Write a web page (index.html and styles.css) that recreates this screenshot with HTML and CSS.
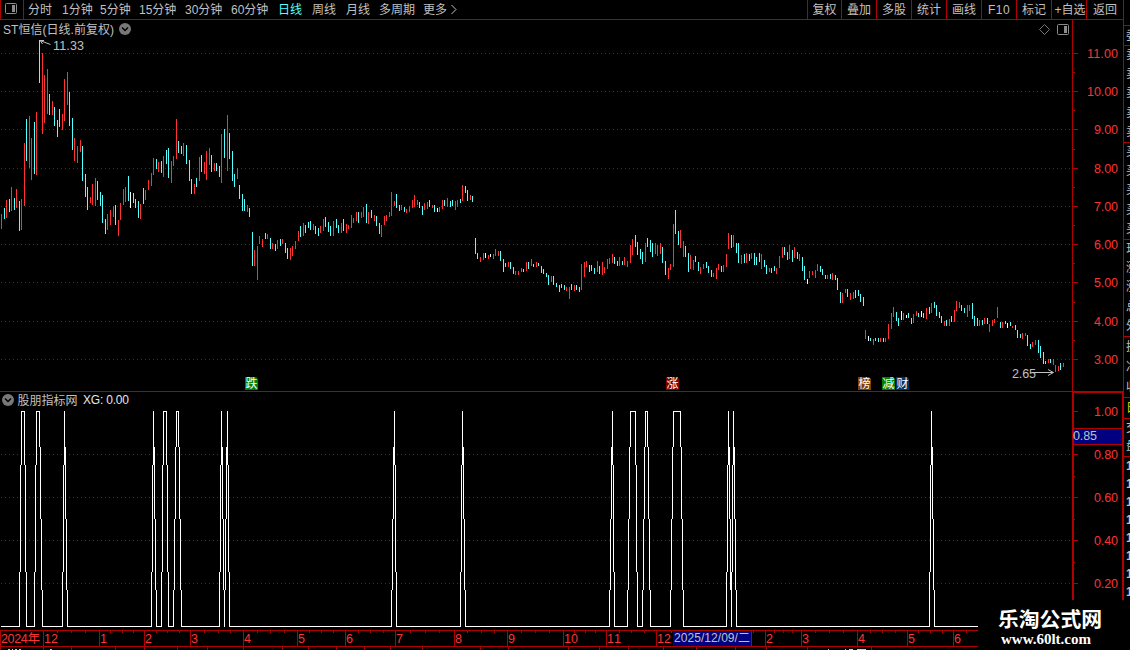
FILE: index.html
```html
<!DOCTYPE html>
<html lang="zh-CN">
<head>
<meta charset="utf-8">
<title>ST恒信</title>
<link rel="stylesheet" href="styles.css">
</head>
<body>
<div class="app">
  <div class="main">
    <header class="toolbar">
      <div class="dock"><svg width="14" height="14" viewBox="0 0 14 14"><rect x="1.5" y="1.5" width="11" height="10" rx="1" fill="none" stroke="#8c8c8c"/><rect x="8" y="3" width="3" height="7" fill="#8c8c8c"/></svg></div>
      <nav class="periods">
        <span class="w34">分时</span><span class="w38">1分钟</span><span class="w39">5分钟</span><span class="w46">15分钟</span><span class="w46">30分钟</span><span class="w47">60分钟</span><span class="w34 active">日线</span><span class="w34">周线</span><span class="w33">月线</span><span class="w44">多周期</span><span class="w27">更多</span><svg width="8" height="12" viewBox="0 0 8 12"><path d="M1.5 1L6 5.500L1.5 10" fill="none" stroke="#c0c0c0"/></svg>
      </nav>
      <nav class="tools">
        <span class="first">复权</span><span>叠加</span><span>多股</span><span>统计</span><span>画线</span><span class="latin">F10</span><span>标记</span><span class="plus">+自选</span><span class="last">返回</span>
      </nav>
    </header>
    <svg class="price" id="price" width="1123" height="371" viewBox="0 20 1123 371">
      <text x="3" y="33.500" textLength="111">ST恒信(日线.前复权)</text>
      <circle cx="125" cy="29" r="6" fill="#787878"/><path class="chev" d="M122 27.500L125 30.500L128 27.500"/>
      <path d="M1039.500 29.500L1044.500 24.500L1049.500 29.500L1044.500 34.500Z" fill="none" stroke="#787878"/>
      <rect x="1057.500" y="24.500" width="11" height="10" rx="1" fill="none" stroke="#8c8c8c"/><rect x="1064" y="26" width="3" height="7" fill="#8c8c8c"/>
    </svg>
    <svg class="signal" id="signal" width="1123" height="239" viewBox="0 391 1123 239">
      <circle cx="8" cy="400" r="6" fill="#787878"/><path class="chev" d="M5 398.500L8 401.500L11 398.500"/>
      <text x="17.500" y="404.500" textLength="60">股朋指标网</text>
      <text class="bright" x="83" y="404" textLength="46">XG: 0.00</text>
    </svg>
    <svg class="dates" id="dates" width="1123" height="20" viewBox="0 630 1123 20"></svg>
  </div>
  <aside class="quotes">
    <div class="blank"></div>
    <div class="row h20">委</div>
    <div class="row h97"><i>卖</i><i>卖</i><i>卖</i><i>卖</i><i>卖</i></div>
    <div class="row h97"><i>买</i><i>买</i><i>买</i><i>买</i><i>买</i></div>
    <div class="row h97"><i>现</i><i>涨</i><i>涨</i><i>总</i><i>外</i></div>
    <div class="row h61"><i>换</i><i>净</i><i>收</i></div>
    <div class="row h21 yellow">日</div>
    <div class="row h38"><i>交</i><i>盘</i></div>
    <div class="row deals"><i>1</i><i>1</i><i>1</i><i>1</i><i>1</i><i>1</i><i>1</i><i>1</i></div>
  </aside>
  <div class="brand"><b>乐淘公式网</b><span>www.60lt.com</span></div>
</div>
<script src="chart.js"></script>
</body>
</html>
```
FILE: styles.css
```css
* { box-sizing: border-box; }
body { margin: 0; background: #000; overflow: hidden; }
.app {
  position: relative;
  display: flex;
  width: 1130px;
  height: 650px;
  color: #c0c0c0;
  font: 12px/16px "Liberation Sans", "Noto Sans CJK SC", sans-serif;
  overflow: hidden;
}
.main { width: 1123px; display: flex; flex-direction: column; }
.main svg { display: block; flex: none; }
.toolbar {
  display: flex;
  height: 20px;
  border-bottom: 1px solid #b00000;
  border-left: 1px solid #b00000;
  white-space: nowrap;
}
.dock { width: 23px; height: 19px; padding: 2px 0 0 3px; border-right: 1px solid #b00000; }
.periods { display: flex; align-items: center; width: 783px; padding-left: 4px; }
.periods span { flex: none; }
.w27 { width: 27px; }
.w33 { width: 33px; }
.w34 { width: 34px; }
.w38 { width: 38px; }
.w39 { width: 39px; }
.w44 { width: 44px; }
.w46 { width: 46px; }
.w47 { width: 47px; }
.active { color: #54ffff; }
.tools { display: flex; height: 19px; }
.tools span {
  width: 35px;
  padding-top: 2px;
  border-left: 1px solid #b00000;
  text-align: center;
}
.tools .first { width: 34px; }
.tools .last { width: 37px; }
.tools .latin { letter-spacing: 0.5px; }
.tools .plus { padding-left: 2px; }
.quotes { width: 7px; height: 650px; border-left: 1px solid #b00000; overflow: hidden; }
.row {
  display: flex;
  flex-direction: column;
  justify-content: space-around;
  border-top: 1px solid #b00000;
  padding-left: 2px;
  width: 20px;
}
.row i { font-style: normal; line-height: 17px; }
.blank { height: 25px; }
.h20 { height: 20px; }
.h21 { height: 21px; }
.h38 { height: 38px; }
.h61 { height: 61px; }
.h97 { height: 97px; }
.yellow { color: #d8d800; }
.deals { height: 146px; font-weight: bold; }
.brand {
  position: absolute;
  left: 978px;
  top: 600px;
  width: 152px;
  height: 50px;
  padding: 6px 0 0 20px;
  background: #000;
  color: #fff;
  display: flex;
  flex-direction: column;
}
.brand b { font: bold 20.8px/25px "Noto Sans CJK SC", sans-serif; }
.brand span { font: bold 15px/16px "Liberation Serif", serif; padding-left: 3px; }
text { fill: #c0c0c0; font-size: 12px; }
.axis { fill: #ff3232; font-size: 12.5px; }
.note { font-size: 12.5px; }
.bright { fill: #e8e8e8; }
.arrow { fill: none; stroke: #c0c0c0; }
.chev { fill: none; stroke: #000; stroke-width: 1.5; }
.frame { fill: #b00000; }
.grid { stroke: #b00000; stroke-dasharray: 1 3; }
.bars { fill: none; stroke-width: 1; shape-rendering: crispEdges; }
.tag { fill: #fff; font-size: 12px; }
```
FILE: chart.js
```js
const NS = "http://www.w3.org/2000/svg";
const price = document.getElementById("price");
const signal = document.getElementById("signal");
const dates = document.getElementById("dates");

function add(parent, name, attrs, text) {
  const el = document.createElementNS(NS, name);
  for (const key in attrs) el.setAttribute(key, attrs[key]);
  if (text !== undefined) el.textContent = text;
  parent.appendChild(el);
  return el;
}
function box(parent, x, y, width, height, fill) {
  const attrs = { x, y, width, height, class: "frame" };
  if (fill) { delete attrs.class; attrs.fill = fill; }
  return add(parent, "rect", attrs);
}
function gridLine(parent, y) {
  add(parent, "line", { x1: 1, x2: 1072, y1: y + 0.5, y2: y + 0.5, class: "grid" });
}
function label(parent, y, text) {
  const w = text.length === 5 ? 31 : 24;
  add(parent, "text", { x: 1118 - w, y: y + 5, textLength: w, class: "axis" }, text);
}

// Price scale and grid
[53, 91, 129, 168, 206, 244, 282, 321, 359].forEach((y, i) => {
  gridLine(price, y);
  box(price, 1073, y, 5, 1);
  label(price, y, (11 - i).toFixed(2));
});
[72, 110, 149, 187, 225, 263, 302, 340].forEach(y => box(price, 1073, y, 2, 1));
box(price, 1072, 20, 1, 371);

// Daily ranges: direction, x, high, low
const candles = `R1 214 229,C4 208 219,R6 200 218,C9 199 212,R11 187 211,C14 198 210,R16 189 208,C19 201 231,R21 199 230,R24 143 206,C26 119 161,R29 116 168,R31 138 180,C34 122 174,R36 112 175,C39 40 83,R42 53 134,R44 75 123,R47 69 114,C49 94 115,R52 101 115,C54 107 126,C57 120 137,C59 109 127,R62 114 130,R64 79 121,R67 72 105,C69 92 126,C72 118 150,R74 138 161,R77 146 163,R80 140 152,C82 146 181,C85 174 197,C87 187 210,R90 197 203,R92 184 205,R95 178 206,C97 181 200,C100 192 206,C102 195 223,C105 219 234,R107 214 230,R110 210 225,R113 206 217,C115 205 225,R118 220 236,R120 203 220,R123 189 205,R125 187 202,C128 176 201,W130 192 208,C133 193 203,C135 199 208,C138 201 218,R140 204 219,C143 188 204,R145 190 200,R148 180 190,R151 173 186,R153 158 175,C156 159 169,R158 162 172,C161 161 173,R163 156 177,C166 150 164,C168 148 178,R171 161 183,R173 156 166,R176 119 159,C178 141 153,C181 146 154,R183 143 156,C186 145 164,C189 160 181,C191 179 194,R194 184 194,C196 178 187,R199 157 181,C201 155 172,R204 162 174,R206 151 180,R209 148 165,C211 155 172,R214 163 171,C216 163 171,C219 166 177,R221 134 183,C224 129 158,R227 115 171,C229 133 159,C232 151 181,C234 174 187,R237 168 179,C239 185 199,
C242 194 211,C244 199 211,R247 205 212,C249 208 217,C252 232 266,R254 250 266,R257 246 280,R259 236 244,R262 239 247,C265 233 239,R267 234 239,C270 238 249,R272 243 249,C275 244 251,R277 240 249,C280 239 246,R282 239 244,C285 243 253,C287 248 259,R290 248 260,R292 246 256,R295 241 249,R298 231 241,C300 226 237,R303 223 236,C305 225 233,C308 222 228,C310 221 230,R313 224 230,C315 226 234,C318 228 236,R320 226 233,R323 219 231,C325 217 227,C328 222 232,C330 226 236,R333 221 236,C336 219 228,C338 225 233,R341 223 233,C343 219 231,R346 224 233,R348 225 229,R351 215 228,R353 218 223,R356 212 221,C358 212 223,R361 212 218,R363 207 217,C366 204 223,R368 212 224,C371 210 218,R374 215 221,C376 216 226,C379 223 234,R381 225 237,R384 216 225,R386 215 221,R389 212 217,R391 192 216,R394 201 206,C396 194 208,C399 205 211,R401 205 210,C404 207 212,R406 209 213,R409 206 212,R412 200 208,R414 195 207,R417 200 205,C419 202 208,C422 206 215,R424 203 210,R427 202 209,C429 200 207,R432 205 208,C434 205 212,W437 208 212,R439 207 212,R442 200 209,C444 200 206,R447 198 207,C450 201 207,C452 200 206,R455 201 210,R457 200 207,C460 199 203,R462 185 201,C465 186 193,C467 190 201,R470 195 200,C472 196 202,
C475 238 254,C477 253 259,R480 257 262,R483 253 260,W485 253 258,R488 255 259,W490 254 257,R493 254 259,R495 249 256,R498 251 256,C500 251 261,C503 259 272,C505 263 267,R508 262 267,C510 262 269,C513 267 274,R515 271 275,R518 271 275,R521 268 272,C523 269 272,R526 262 271,C528 262 269,R531 259 266,C533 264 267,R536 262 267,C538 263 266,C541 266 273,C543 269 274,C546 273 277,C548 275 285,R551 276 282,C553 276 285,C556 283 287,C559 285 292,C561 284 288,C564 285 290,R566 287 291,R569 287 299,C571 284 290,R574 285 291,C576 285 290,C579 287 292,R581 264 290,R584 262 277,R586 261 267,C589 265 272,C591 265 271,C594 268 274,R597 261 272,C599 266 274,R602 262 275,R604 267 273,R607 259 269,R609 258 264,R612 254 263,C614 257 264,C617 261 266,R619 257 266,C622 261 265,R624 257 265,R627 261 267,R630 245 263,R632 239 255,C635 235 247,C637 242 255,C640 249 259,C642 252 264,R645 243 262,C647 238 247,C650 240 252,C652 243 257,R655 243 254,R657 245 256,R660 243 254,C662 247 263,C665 261 275,R668 268 279,R670 264 270,R673 224 267,C675 210 234,C678 231 245,R680 230 248,R683 241 257,C685 246 257,C688 253 272,R690 255 269,R693 260 270,C695 256 262,C698 262 271,R700 267 274,R703 264 269,C706 262 268,C708 266 273,C711 270 277,R713 273 277,R716 268 279,R718 264 270,C721 266 272,R723 265 272,R726 254 267,
R728 233 249,C731 235 248,R733 235 247,C736 243 253,C738 243 263,R741 255 264,C744 254 263,R746 253 263,C749 254 261,R751 253 259,C754 253 265,C756 257 265,C759 253 262,R761 254 269,C764 260 267,C766 265 274,R769 268 272,C771 268 273,C774 266 271,R776 268 274,R779 256 268,R782 247 258,C784 247 255,C787 252 260,R789 245 259,C792 250 262,R794 247 258,C797 252 259,R799 254 261,C802 257 271,C804 266 280,W807 279 284,R809 271 278,R812 271 275,R815 270 278,R817 264 271,C820 266 272,C822 269 275,C825 275 279,R827 275 279,C830 274 279,R832 273 280,C835 275 280,C837 278 290,C840 292 303,R842 293 303,R845 289 293,C847 289 297,R850 293 300,R853 292 299,C855 290 298,C858 290 296,C860 294 302,C863 297 306,R865 330 339,W868 336 341,C870 338 341,R873 339 345,C875 338 341,C878 338 342,R880 338 342,C883 338 342,R885 338 342,R888 324 339,R891 313 329,R893 307 317,C896 312 321,C898 318 326,W901 311 320,R903 313 320,W906 315 318,C908 313 318,C911 318 324,R913 314 323,R916 311 316,C918 313 317,W921 311 317,C923 313 318,R926 308 319,C929 307 314,R931 303 313,C934 302 308,C936 305 316,C939 312 318,C941 316 323,R944 321 326,C946 320 326,R949 319 326,C951 316 322,R954 310 322,R956 301 311,R959 302 308,C961 305 311,C964 308 313,R967 305 317,R969 305 311,C972 303 319,C974 316 326,C977 318 326,R979 320 326,C982 320 325,R984 318 324,C987 318 324,R989 324 332,R992 320 326,R994 319 323,R997 307 318,C1000 322 328,R1002 322 328,C1005 321 324,W1007 323 328,C1010 322 326,R1012 326 328,C1015 325 330,C1017 330 338,C1020 334 338,R1022 333 339,R1025 333 336,C1027 335 346,C1030 344 349,R1032 342 347,R1035 340 345,C1038 340 353,C1040 346 358,C1043 352 364,C1045 361 364,R1048 359 363,C1050 359 363,R1053 359 365,R1055 365 372,R1058 366 371,C1060 363 370,R1063 363 367`;
const paths = { R: "", C: "", W: "" };
candles.split(",").forEach(item => {
  const [head, top, bottom] = item.trim().split(" ");
  paths[head[0]] += `M${+head.slice(1) + 0.5} ${top}V${bottom}`;
});
const colors = { R: "#ff3232", C: "#54ffff", W: "#ffffff" };
for (const k in paths) add(price, "path", { d: paths[k], stroke: colors[k], class: "bars" });

// High and low annotations
add(price, "path", { d: "M50.5 44.5L40 40.500H44M40.5 41L42.500 44", class: "arrow" });
add(price, "text", { x: 53, y: 50, textLength: 31, class: "note" }, "11.33");
add(price, "text", { x: 1012, y: 378, textLength: 24, class: "note" }, "2.65");
add(price, "path", { d: "M1032 372.500H1053M1048 369.500L1053.500 372.500L1048 375.500", class: "arrow" });

// Event tags
[[245, "跌", "#008000"], [666, "涨", "#800000"], [858, "榜", "#804000"], [882, "减", "#008000"], [896, "财", "#003366"]].forEach(([x, t, c]) => {
  add(price, "path", { d: `M${x} 377h11l2 2v11h-13z`, fill: c });
  add(price, "text", { x: x + 0.5, y: 388, class: "tag" }, t);
});

// Signal scale and grid
box(signal, 0, 391, 1123, 1);
box(signal, 1072, 391, 51, 2);
box(signal, 1072, 391, 2, 239);
box(signal, 1122, 391, 1, 239);
[411, 454, 497, 540, 583].forEach((y, i) => {
  if (i) gridLine(signal, y);
  box(signal, 1074, y, 4, 1);
  label(signal, y, (1 - i * 0.2).toFixed(2));
});
[476, 519, 562].forEach(y => box(signal, 1074, y, 1, 1));
box(signal, 1074, 428, 48, 17);
box(signal, 1074, 429, 48, 15, "#000080");
add(signal, "text", { x: 1073, y: 440, textLength: 24, class: "note" }, "0.85");

// Signal pulses: base left, peak left, peak right, base right
const pulses = [[19, 21, 24, 26], [34, 36, 39, 42], [62, 64, 64, 67], [151, 153, 153, 156], [161, 163, 166, 168], [173, 176, 178, 181], [219, 221, 221, 224], [224, 227, 227, 229], [391, 394, 394, 396], [460, 462, 462, 465], [609, 612, 612, 614], [627, 630, 635, 637], [642, 645, 647, 650], [670, 673, 680, 683], [726, 728, 728, 731], [731, 733, 733, 736], [929, 931, 931, 934]];
const LOW = 626, HIGH = 411;
function edge(base, peak) {
  const n = Math.abs(peak - base), dir = Math.sign(peak - base);
  const step = (LOW - HIGH) / n;
  let d = "";
  for (let i = 0; i <= n; i++) {
    const lower = i === 0 ? LOW + 1 : Math.round(LOW - (i - 0.5) * step);
    const upper = i === n ? HIGH : Math.round(LOW - (i + 0.5) * step);
    d += `M${base + dir * i + 0.5} ${lower}V${upper}`;
  }
  return d;
}
let wave = "", x = 1;
pulses.forEach(([a, b, c, e]) => {
  wave += `M${x} ${LOW + 0.5}H${a + 1}` + edge(a, b) + `M${b} ${HIGH + 0.5}H${c + 1}` + edge(e, c);
  x = e;
});
wave += `M${x} ${LOW + 0.5}H1072`;
add(signal, "path", { d: wave, stroke: "#ffffff", class: "bars" });

// Date axis
box(dates, 0, 630, 1123, 1);
box(dates, 0, 646, 1123, 1);
[[0, ""], [43, "12"], [99, "1"], [144, "2"], [190, "3"], [243, "4"], [297, "5"], [345, "6"], [395, "7"], [454, "8"], [507, "9"], [563, "10"], [606, "11"], [656, "12"], [765, "2"], [801, "3"], [857, "4"], [907, "5"], [953, "6"]].forEach(([x, t]) => {
  box(dates, x, 630, 1, 16);
  add(dates, "text", { x: x + 1, y: 643, textLength: t.length * 7, class: "axis" }, t);
});
add(dates, "text", { x: 1, y: 643, textLength: 39, class: "axis" }, "2024年");
[57, 71, 85, 110, 122, 133, 156, 167, 179, 204, 218, 230, 257, 270, 284, 309, 321, 333, 358, 370, 383, 410, 425, 439, 467, 481, 494, 521, 535, 549, 574, 585, 595, 619, 631, 644, 671, 753, 774, 783, 792, 815, 829, 843, 870, 882, 895, 918, 930, 942, 966].forEach(x => box(dates, x, 631, 1, 2));
[0, 43, 71, 115, 144, 177, 207, 243, 282, 308, 336, 364, 390, 422, 480, 508, 568, 599, 628, 663, 696, 735, 766, 807, 871].forEach(x => box(dates, x, 647, 1, 3));
box(dates, 673, 631, 78, 15, "#000080");
box(dates, 751, 630, 1, 16);
add(dates, "text", { x: 674, y: 642, textLength: 76 }, "2025/12/09/二");
[[8, 2], [12, 1], [15, 2], [19, 2], [50, 2], [828, 1], [845, 1]].forEach(([x, w]) => box(dates, x, 649, w, 1, "#c0c0c0"));
box(dates, 849, 649, 4, 1, "#54ffff");
box(dates, 857, 649, 9, 1, "#54ffff");
```
